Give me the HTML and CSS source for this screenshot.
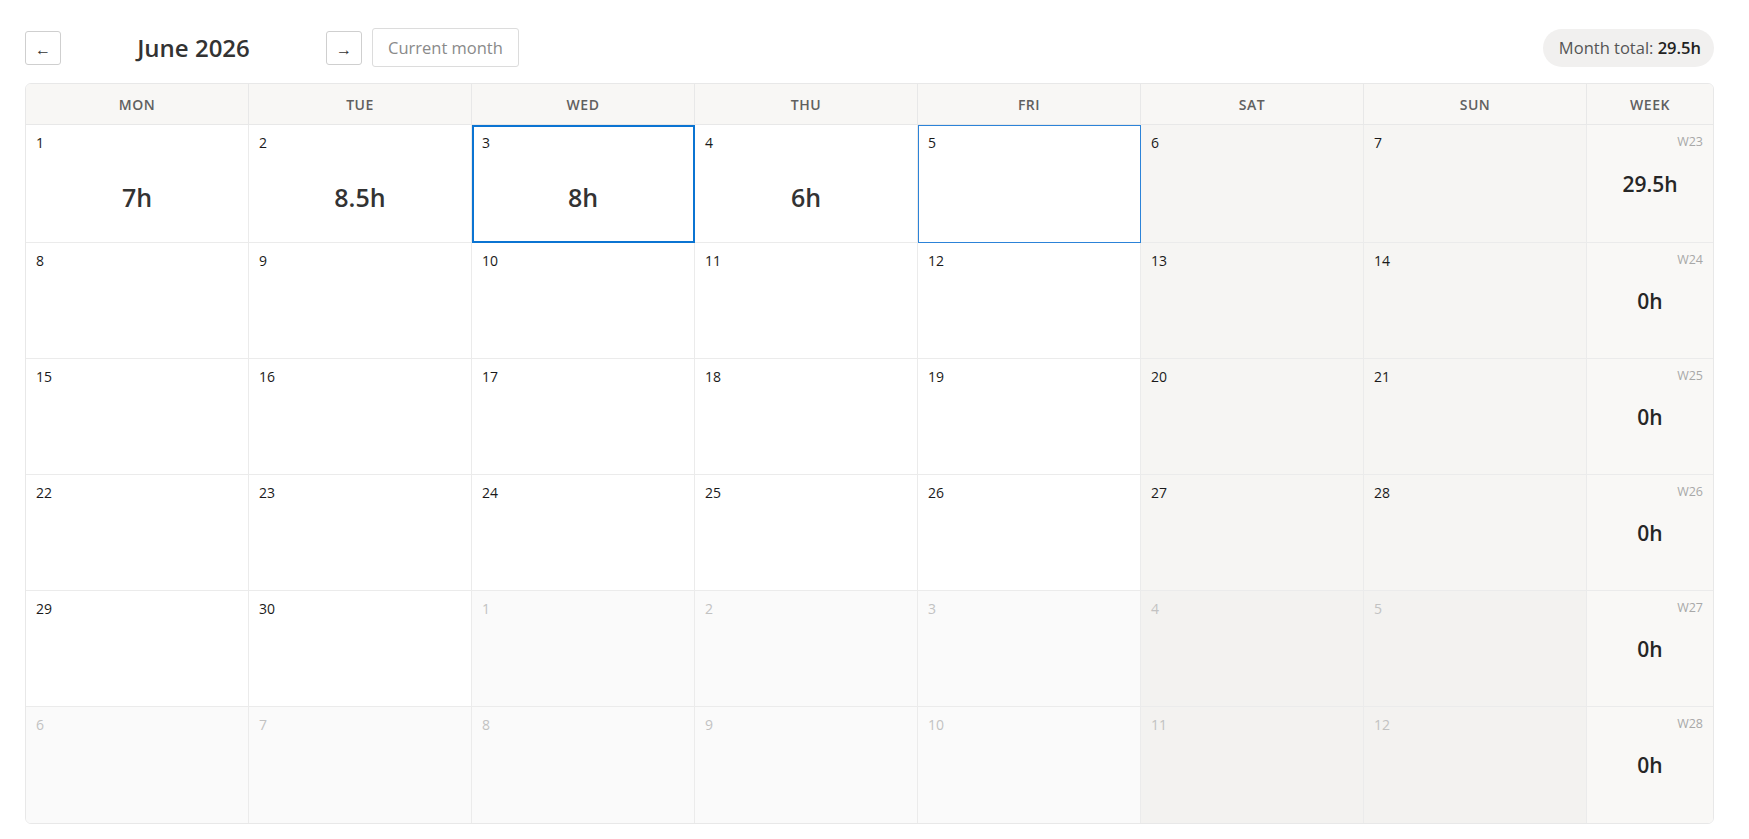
FILE: index.html
```html
<!DOCTYPE html>
<html lang="en">
<head>
    <meta charset="UTF-8">
    <meta name="viewport" content="width=device-width, initial-scale=1.0">
    <title>Timesheet - June 2026</title>
    <link rel="stylesheet" href="styles.css">
</head>
<body>
    <div class="page">
        <div class="topbar">
            <div class="nav">
                <button class="nav-btn" title="Previous month">&larr;</button>
                <h1 class="month-title">June 2026</h1>
                <button class="nav-btn" title="Next month">&rarr;</button>
                <button class="today-btn">Current month</button>
            </div>
            <div class="month-total">Month total: <strong>29.5h</strong></div>
        </div>

        <div class="calendar">
            <div class="head">Mon</div>
            <div class="head">Tue</div>
            <div class="head">Wed</div>
            <div class="head">Thu</div>
            <div class="head">Fri</div>
            <div class="head">Sat</div>
            <div class="head">Sun</div>
            <div class="head">Week</div>

            <!-- week 23 -->
            <div class="day"><span class="date">1</span><span class="hours">7h</span></div>
            <div class="day"><span class="date">2</span><span class="hours">8.5h</span></div>
            <div class="day today"><span class="date">3</span><span class="hours">8h</span></div>
            <div class="day"><span class="date">4</span><span class="hours">6h</span></div>
            <div class="day selected"><span class="date">5</span></div>
            <div class="day weekend"><span class="date">6</span></div>
            <div class="day weekend"><span class="date">7</span></div>
            <div class="week"><span class="week-no">W23</span><span class="week-total">29.5h</span></div>

            <!-- week 24 -->
            <div class="day"><span class="date">8</span></div>
            <div class="day"><span class="date">9</span></div>
            <div class="day"><span class="date">10</span></div>
            <div class="day"><span class="date">11</span></div>
            <div class="day"><span class="date">12</span></div>
            <div class="day weekend"><span class="date">13</span></div>
            <div class="day weekend"><span class="date">14</span></div>
            <div class="week"><span class="week-no">W24</span><span class="week-total">0h</span></div>

            <!-- week 25 -->
            <div class="day"><span class="date">15</span></div>
            <div class="day"><span class="date">16</span></div>
            <div class="day"><span class="date">17</span></div>
            <div class="day"><span class="date">18</span></div>
            <div class="day"><span class="date">19</span></div>
            <div class="day weekend"><span class="date">20</span></div>
            <div class="day weekend"><span class="date">21</span></div>
            <div class="week"><span class="week-no">W25</span><span class="week-total">0h</span></div>

            <!-- week 26 -->
            <div class="day"><span class="date">22</span></div>
            <div class="day"><span class="date">23</span></div>
            <div class="day"><span class="date">24</span></div>
            <div class="day"><span class="date">25</span></div>
            <div class="day"><span class="date">26</span></div>
            <div class="day weekend"><span class="date">27</span></div>
            <div class="day weekend"><span class="date">28</span></div>
            <div class="week"><span class="week-no">W26</span><span class="week-total">0h</span></div>

            <!-- week 27 -->
            <div class="day"><span class="date">29</span></div>
            <div class="day"><span class="date">30</span></div>
            <div class="day outside"><span class="date">1</span></div>
            <div class="day outside"><span class="date">2</span></div>
            <div class="day outside"><span class="date">3</span></div>
            <div class="day outside weekend"><span class="date">4</span></div>
            <div class="day outside weekend"><span class="date">5</span></div>
            <div class="week"><span class="week-no">W27</span><span class="week-total">0h</span></div>

            <!-- week 28 -->
            <div class="day outside"><span class="date">6</span></div>
            <div class="day outside"><span class="date">7</span></div>
            <div class="day outside"><span class="date">8</span></div>
            <div class="day outside"><span class="date">9</span></div>
            <div class="day outside"><span class="date">10</span></div>
            <div class="day outside weekend"><span class="date">11</span></div>
            <div class="day outside weekend"><span class="date">12</span></div>
            <div class="week"><span class="week-no">W28</span><span class="week-total">0h</span></div>
        </div>
    </div>
</body>
</html>
```

FILE: styles.css
```css
* {
    margin: 0;
    padding: 0;
    box-sizing: border-box;
}

body {
    font-family: "Open Sans", "Noto Sans", sans-serif;
    background: white;
    color: #222;
}

.page {
    padding: 28px 35px 0 25px;
}

.topbar {
    display: flex;
    align-items: center;
    justify-content: space-between;
    margin-bottom: 16px;
}

.nav {
    display: flex;
    align-items: center;
    gap: 10px;
}

.nav-btn {
    width: 36px;
    height: 34px;
    padding-top: 2px;
    background: white;
    border: 1px solid #cfcfcf;
    border-radius: 3px;
    font-family: inherit;
    font-size: 16px;
    color: #333;
    cursor: pointer;
}

.month-title {
    width: 245px;
    text-align: center;
    font-size: 24px;
    font-weight: 600;
    color: #333;
}

.today-btn {
    height: 39px;
    padding: 0 15px;
    background: white;
    border: 1px solid #dcdcdc;
    border-radius: 3px;
    font-family: inherit;
    font-size: 16.5px;
    color: #8a8a8a;
    cursor: pointer;
}

.month-total {
    height: 38px;
    padding: 0 13px 0 16px;
    display: flex;
    align-items: center;
    background: #f1f0ef;
    border-radius: 19px;
    font-size: 16.5px;
    color: #555;
    white-space: pre;
}

.month-total strong {
    font-weight: 600;
    color: #222;
}

.calendar {
    display: grid;
    grid-template-columns: repeat(7, 1fr) 126px;
    grid-template-rows: 41px repeat(6, 1fr);
    height: 741px;
    border: 1px solid #e8e8e8;
    border-radius: 6px;
    overflow: hidden;
}

.head {
    display: flex;
    align-items: center;
    justify-content: center;
    background: #f8f7f5;
    border-right: 1px solid #e8e8e8;
    border-bottom: 1px solid #e8e8e8;
    font-size: 14px;
    font-weight: 600;
    letter-spacing: 0.5px;
    text-transform: uppercase;
    color: #606060;
}

.day,
.week {
    border-right: 1px solid #ebebeb;
    border-bottom: 1px solid #ebebeb;
}

.head:nth-child(8),
.week {
    border-right: none;
}

.calendar > :nth-last-child(-n+8) {
    border-bottom: none;
}

.day {
    display: flex;
    flex-direction: column;
    padding: 8px 10px 0;
    background: white;
}

.date {
    font-size: 14px;
    line-height: 20px;
    color: #1a1a1a;
}

.hours {
    flex: 1;
    min-height: 89px;
    display: flex;
    align-items: center;
    justify-content: center;
    padding-bottom: 2px;
    font-size: 25px;
    font-weight: 600;
    color: #333;
}

.day.weekend {
    background: #f6f5f3;
}

.day.outside {
    background: #fafafa;
}

.day.outside.weekend {
    background: #f3f2f0;
}

.day.outside .date {
    color: #c2c2c2;
}

.day.today {
    outline: 2px solid #0b74d2;
    outline-offset: -2px;
}

.day.selected {
    outline: 1px solid #2c83d8;
    outline-offset: -1px;
}

.week {
    position: relative;
    display: flex;
    align-items: center;
    justify-content: center;
    background: #f9f8f6;
}

.week-no {
    position: absolute;
    top: 8px;
    right: 10px;
    font-size: 12.5px;
    color: #a8a8a8;
}

.week-total {
    font-size: 21px;
    font-weight: 600;
    color: #262626;
}
```
